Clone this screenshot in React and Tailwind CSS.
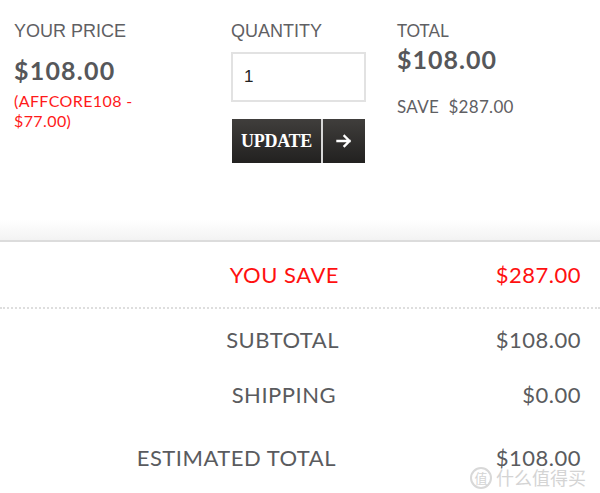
export default function App() {
  const sans = { fontFamily: '"Lato", "Open Sans", sans-serif' };
  const arial = { fontFamily: '"Liberation Sans", Arial, sans-serif' };
  return (
    <div className="w-[600px] h-[493px] bg-white overflow-hidden relative" style={sans}>
      <div className="flex pt-[20px] h-[220px]">
        <div className="w-[231px] shrink-0 pl-[14px]">
          <div className="text-[18px] leading-[22px] text-[#5f6063]" style={arial}>YOUR PRICE</div>
          <div className="mt-[13px] text-[25px] leading-[30px] font-bold tracking-[1.2px] text-[#56575a]">$108.00</div>
          <div className="mt-[6px] text-[16px] leading-[20px] tracking-[0.4px] text-[#ff1a1a]">(AFFCORE108 -<br />$77.00)</div>
        </div>
        <div className="w-[166px] shrink-0">
          <div className="text-[18px] leading-[22px] text-[#5f6063]" style={arial}>QUANTITY</div>
          <div className="mt-[10px] w-[135px] h-[50px] border-2 border-[#e2e2e2] flex items-center pl-[11px] text-[17px] text-[#222]" style={arial}>1</div>
          <div className="mt-[17px] ml-[1px] w-[133px] h-[44px] flex bg-gradient-to-b from-[#403e3c] to-[#222120] text-white">
            <div className="w-[89px] flex items-center justify-center text-[18px] font-bold tracking-[-0.3px]" style={{ fontFamily: '"Liberation Serif", "Times New Roman", serif' }}>UPDATE</div>
            <div className="w-[2px] bg-[#d8d8d8]" />
            <div className="flex-1 flex items-center justify-center">
              <svg width="16" height="14" viewBox="0 0 16 14" fill="none" stroke="white" strokeWidth="2.4" strokeLinecap="square">
                <path d="M1.5 7h12M8.5 2l5 5-5 5" />
              </svg>
            </div>
          </div>
        </div>
        <div className="flex-1">
          <div className="text-[17px] leading-[22px] text-[#5f6063]">TOTAL</div>
          <div className="mt-[2px] text-[25px] leading-[30px] font-bold tracking-[1px] text-[#56575a]">$108.00</div>
          <div className="mt-[23px] text-[17px] leading-[20px] tracking-[0.3px] text-[#5f6063]">SAVE&nbsp; $287.00</div>
        </div>
      </div>
      <div className="h-[20px] bg-gradient-to-b from-white to-[#f3f3f3]" />
      <div className="h-[2px] bg-[#dcdcdc]" />
      <div className="flex items-center h-[65px] text-[22px] tracking-[0.5px] text-[#ff1010]">
        <div className="w-[339px] text-right">YOU SAVE</div>
        <div className="w-[242px] text-right">$287.00</div>
      </div>
      <div className="border-t-2 border-dotted border-[#dedede]" />
      <div className="flex items-center h-[58px] mt-[1px] text-[22px] tracking-[0.5px] text-[#5a5b5e]">
        <div className="w-[339px] text-right">SUBTOTAL</div>
        <div className="w-[242px] text-right">$108.00</div>
      </div>
      <div className="flex items-center h-[52px] text-[22px] tracking-[0.5px] text-[#5a5b5e]">
        <div className="w-[336px] text-right">SHIPPING</div>
        <div className="w-[245px] text-right">$0.00</div>
      </div>
      <div className="flex items-center h-[74px] text-[22px] tracking-[0.5px] text-[#5a5b5e]">
        <div className="w-[336px] text-right">ESTIMATED TOTAL</div>
        <div className="w-[245px] text-right">$108.00</div>
      </div>
      <div className="absolute right-[14px] bottom-[2px] flex items-center gap-[4px] text-[#d4d4d4] text-[18px]" style={{ fontFamily: '"Noto Sans CJK SC", sans-serif' }}>
        <span className="w-[22px] h-[22px] rounded-full border-2 border-[#d8d8d8] flex items-center justify-center text-[13px]">值</span>
        <span>什么值得买</span>
      </div>
    </div>
  );
}
